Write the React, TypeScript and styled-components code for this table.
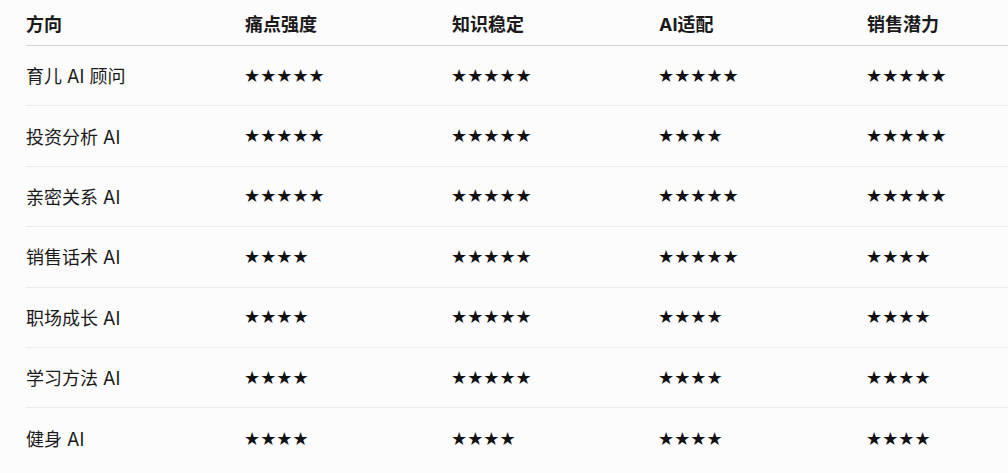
import React from 'react'
import styled, { createGlobalStyle } from 'styled-components'

const GlobalStyle = createGlobalStyle`
html, body {
  margin: 0;
  padding: 0;
  background: #fcfcfc;
  overflow: hidden;
}
body {
  font-family: "Inter", "Noto Sans CJK SC", sans-serif;
  color: #1a1a1a;
}
`

const Page = styled.div`
padding: 0 0 0 26px;
width: 1100px;
`

const Row = styled.div<{ $head?: boolean; $last?: boolean }>`
box-sizing: border-box;
display: grid;
grid-template-columns: 219px 207px 207px 208px 1fr;
align-items: center;
height: ${p => (p.$head ? '46px' : '60.4px')};
padding-bottom: ${p => (p.$head ? '0' : '1px')};
border-bottom: ${p => (p.$last ? 'none' : p.$head ? '1.5px solid #d6d6d6' : '1px solid #ececec')};
font-size: 18px;
font-weight: ${p => (p.$head ? 700 : 400)};
`

const Cell = styled.div`
white-space: nowrap;
`

const Stars = styled.div`
font-family: "DejaVu Sans", sans-serif;
font-size: 18px;
color: #111;
margin-left: -1px;
`

const headers = ['方向', '痛点强度', '知识稳定', 'AI适配', '销售潜力']

const rows: [string, number[]][] = [
  ['育儿 AI 顾问', [5, 5, 5, 5]],
  ['投资分析 AI', [5, 5, 4, 5]],
  ['亲密关系 AI', [5, 5, 5, 5]],
  ['销售话术 AI', [4, 5, 5, 4]],
  ['职场成长 AI', [4, 5, 4, 4]],
  ['学习方法 AI', [4, 5, 4, 4]],
  ['健身 AI', [4, 4, 4, 4]],
]

export default function App() {
  return (
    <>
      <GlobalStyle />
      <Page>
        <Row $head>
          {headers.map(h => (
            <Cell key={h}>{h}</Cell>
          ))}
        </Row>
        {rows.map(([name, scores], i) => (
          <Row key={name} $last={i === rows.length - 1}>
            <Cell>{name}</Cell>
            {scores.map((s, j) => (
              <Stars key={j}>{'★'.repeat(s)}</Stars>
            ))}
          </Row>
        ))}
      </Page>
    </>
  )
}
